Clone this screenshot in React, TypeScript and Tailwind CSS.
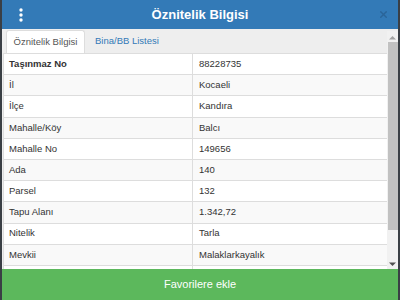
import { X } from "lucide-react";

const rows: [string, string][] = [
  ["Taşınmaz No", "88228735"],
  ["İl", "Kocaeli"],
  ["İlçe", "Kandıra"],
  ["Mahalle/Köy", "Balcı"],
  ["Mahalle No", "149656"],
  ["Ada", "140"],
  ["Parsel", "132"],
  ["Tapu Alanı", "1.342,72"],
  ["Nitelik", "Tarla"],
  ["Mevkii", "Malaklarkayalık"],
  ["", ""],
];

function Kebab() {
  return (
    <svg width="6" height="14" viewBox="0 0 6 14" aria-hidden>
      <circle cx="3" cy="2" r="1.7" fill="white" />
      <circle cx="3" cy="7" r="1.7" fill="white" />
      <circle cx="3" cy="12" r="1.7" fill="white" />
    </svg>
  );
}

function Scrollbar() {
  return (
    <div className="flex w-[11px] shrink-0 flex-col items-center bg-[#f1f1f1] pt-[2px]">
      <svg width="7" height="5" viewBox="0 0 7 5" className="mt-[2px]">
        <path d="M0 4.5 L3.5 1 L7 4.5 Z" fill="#a3a3a3" />
      </svg>
      <div className="mt-[2px] h-[188px] w-[10px] bg-[#c1c1c1]" />
      <div className="flex-1" />
      <svg width="7" height="5" viewBox="0 0 7 5" className="mb-[2px]">
        <path d="M0 0.5 L3.5 4 L7 0.5 Z" fill="#505050" />
      </svg>
    </div>
  );
}

export default function App() {
  return (
    <div
      className="flex h-[300px] w-[400px] flex-col overflow-hidden border-l-2 border-r-2 border-[#3a3f45] bg-[#eeeeee]"
      style={{ fontFamily: '"Liberation Sans", Arial, sans-serif' }}
    >
      <div className="relative flex h-[29px] shrink-0 items-center justify-center bg-[#337ab7]">
        <div className="absolute left-[16px] top-[8px]">
          <Kebab />
        </div>
        <span className="text-[13px] font-bold text-white">Öznitelik Bilgisi</span>
        <X className="absolute right-[9px] top-[9px] text-[#2a6599]" size={11} strokeWidth={3} />
      </div>

      <div className="flex min-h-0 flex-1 pt-[2px]">
        <div className="flex min-w-0 flex-1 flex-col pl-[1px]">
          <div className="flex h-[23px] shrink-0 items-end border-b border-[#dddddd] pl-[3px]">
            <div className="flex h-[23px] w-[79px] items-center justify-center rounded-t-[3px] border border-b-0 border-[#dddddd] bg-white text-[9.5px] text-[#555555]">
              Öznitelik Bilgisi
            </div>
            <div className="flex h-[23px] items-center px-[10px] text-[9.5px] text-[#337ab7]">
              Bina/BB Listesi
            </div>
          </div>
          <div className="min-h-0 flex-1 overflow-hidden">
            <div className="border-l border-[#dddddd] bg-white">
              {rows.map(([k, v], i) => (
                <div
                  key={i}
                  className={`grid h-[21.2px] grid-cols-[189px_1fr] border-b border-[#dddddd] text-[9.5px] text-[#333333] ${
                    i % 2 === 1 ? "bg-[#f9f9f9]" : "bg-white"
                  }`}
                >
                  <div className={`flex items-center border-r border-[#dddddd] pl-[5px] ${i === 0 ? "font-bold" : ""}`}>
                    {k}
                  </div>
                  <div className="flex items-center pl-[6px]">{v}</div>
                </div>
              ))}
            </div>
          </div>
        </div>
        <Scrollbar />
      </div>

      <div className="flex h-[31px] shrink-0 items-center justify-center bg-[#5cb85c] text-[11px] text-white">
        Favorilere ekle
      </div>
    </div>
  );
}
